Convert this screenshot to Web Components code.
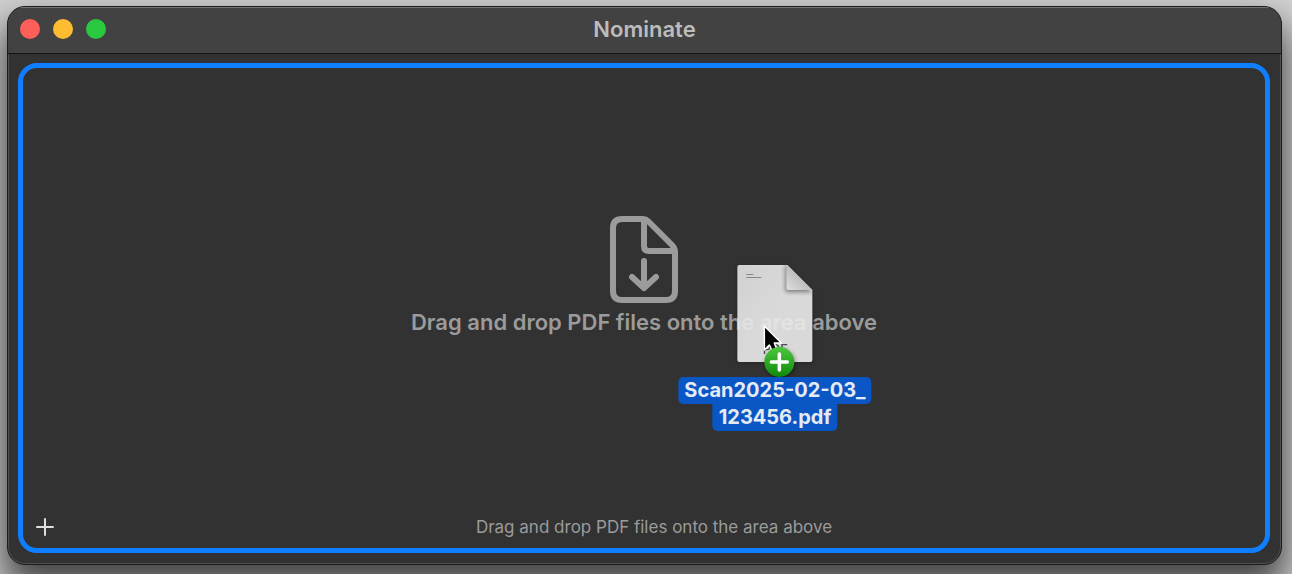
<!DOCTYPE html>
<html lang="en">
<head>
<meta charset="utf-8">
<meta name="viewport" content="width=device-width, initial-scale=1">
<title>Nominate</title>
<style>
    body{
        display: flex;
        box-sizing: border-box;
        min-height: 100vh;
        margin: 0;
        padding: 6px 10px 9px 7px;
        overflow: hidden;
        background: #d2d2d2;
        font-family: Inter, "Liberation Sans", sans-serif;
    }
</style>
</head>
<body>
<app-window heading="Nominate">
    <drop-zone>
        <drop-hint>Drag and drop PDF files onto the area above</drop-hint>
        <status-bar slot="footer">Drag and drop PDF files onto the area above</status-bar>
        <dragged-file slot="drag">
            <span>Scan2025-02-03_</span>
            <span slot="rest">123456.pdf</span>
        </dragged-file>
    </drop-zone>
</app-window>

<script>
//attach an open shadow root with the given markup
function attachTemplate(element, html){
    const template = document.createElement('template');
    template.innerHTML = html;
    element.attachShadow({mode: 'open'}).appendChild(template.content.cloneNode(true));
}

//window frame with title bar
class AppWindow extends HTMLElement{
    constructor(){
        super();
        attachTemplate(this, `
        <style>
            :host{
                display: flex;
                flex-direction: column;
                flex: 1;
                box-sizing: border-box;
                border: 1px solid #1c1c1c;
                border-radius: 18px;
                background: #323232;
                box-shadow: 0 20px 36px 4px rgba(0, 0, 0, .68);
                overflow: hidden;
            }
            header{
                display: grid;
                grid-template-columns: 1fr auto 1fr;
                align-items: center;
                height: 42px;
                padding: 0 12px 3px;
                background: #424242;
                border-top: 1px solid #747474;
                border-bottom: 1px solid #141414;
            }
            .lights{
                display: flex;
                gap: 13px;
            }
            button{
                width: 20px;
                height: 20px;
                padding: 0;
                border: none;
                border-radius: 50%;
            }
            .close{ background: #fe5f58; }
            .minimize{ background: #febc30; }
            .zoom{ background: #2ac940; }
            h1{
                margin: 0;
                font-size: 22px;
                line-height: 26px;
                font-weight: 600;
                color: #bcbcbc;
            }
            main{
                display: flex;
                flex: 1;
                padding: 9px 10px 10px 9px;
                border: 1px solid #505050;
                border-top: none;
                border-radius: 0 0 17px 17px;
            }
        </style>
        <header>
            <div class="lights">
                <button class="close" aria-label="Close"></button>
                <button class="minimize" aria-label="Minimize"></button>
                <button class="zoom" aria-label="Zoom"></button>
            </div>
            <h1></h1>
        </header>
        <main><slot></slot></main>
        `)
    }

    connectedCallback(){
        this.shadowRoot.querySelector('h1').innerText = this.getAttribute('heading')
    }
}

//highlighted drop target
class DropZone extends HTMLElement{
    constructor(){
        super();
        attachTemplate(this, `
        <style>
            :host{
                display: flex;
                flex-direction: column;
                flex: 1;
                position: relative;
                border: 5px solid #0f7fff;
                border-radius: 19px;
            }
            .area{
                display: flex;
                flex: 1;
                align-items: center;
                justify-content: center;
                padding-bottom: 24px;
            }
            ::slotted([slot="drag"]){
                position: absolute;
                top: 41%;
                left: calc(50% + 131px);
                transform: translateX(-50%);
            }
        </style>
        <div class="area"><slot></slot></div>
        <slot name="footer"></slot>
        <slot name="drag"></slot>
        `)
    }
}

//icon and caption in the middle of the drop target
class DropHint extends HTMLElement{
    constructor(){
        super();
        attachTemplate(this, `
        <style>
            :host{
                display: flex;
                flex-direction: column;
                align-items: center;
                gap: 6px;
                color: #9b9b9b;
            }
            p{
                margin: 0;
                font-size: 22px;
                line-height: 26px;
                font-weight: 600;
            }
        </style>
        <svg width="68" height="87" viewBox="0 0 68 87" fill="none" stroke="currentColor" stroke-width="6" stroke-linecap="round" stroke-linejoin="round" aria-hidden="true">
            <path d="M12 3H33Q36 3 38 5L62 29Q65 32 65 36V75Q65 84 56 84H12Q3 84 3 75V12Q3 3 12 3Z"/>
            <path d="M34 4V30Q34 35 39 35H64"/>
            <path d="M34 45V72M22 61L34 72L46 61"/>
        </svg>
        <p><slot></slot></p>
        `)
    }
}

//bottom row with add button
class StatusBar extends HTMLElement{
    constructor(){
        super();
        attachTemplate(this, `
        <style>
            :host{
                display: flex;
                align-items: center;
                height: 42px;
                padding: 0 12px;
                color: #9b9b9b;
            }
            button{
                display: flex;
                padding: 0;
                border: none;
                background: none;
                color: #dedede;
            }
            p{
                flex: 1;
                margin: 0;
                text-align: center;
                font-size: 17px;
                line-height: 20px;
                font-weight: 400;
            }
        </style>
        <button aria-label="Add files">
            <svg width="20" height="20" viewBox="0 0 20 20" fill="none" stroke="currentColor" stroke-width="2" stroke-linecap="round">
                <path d="M10 2V18M2 10H18"/>
            </svg>
        </button>
        <p><slot></slot></p>
        `)
    }
}

class DraggedFile extends HTMLElement{
    constructor(){
        super();
        attachTemplate(this, `
        <style>
            :host{
                display: flex;
                flex-direction: column;
                align-items: center;
            }
            svg{
                display: block;
                overflow: visible;
            }
            .name{
                padding: 0 6px;
                border-radius: 5px;
                background: #0a56c4;
                color: #e4ebf6;
                font-size: 20px;
                line-height: 27px;
                font-weight: 700;
                white-space: nowrap;
            }
            .rest{
                border-radius: 0 0 5px 5px;
            }
        </style>
        <svg width="76" height="112" viewBox="0 0 76 112" aria-hidden="true">
            <defs>
                <linearGradient id="paper" x1="0" y1="0" x2="1" y2="1">
                    <stop offset="0" stop-color="#eeeeee"/>
                    <stop offset=".5" stop-color="#f8f8f8"/>
                    <stop offset="1" stop-color="#f8f8f8"/>
                </linearGradient>
                <linearGradient id="fold" x1="0" y1="1" x2="1" y2="0">
                    <stop offset="0" stop-color="#ffffff"/>
                    <stop offset=".5" stop-color="#d8d8d8"/>
                </linearGradient>
                <linearGradient id="badge" x1="0" y1="0" x2="0" y2="1">
                    <stop offset="0" stop-color="#4cc73c"/>
                    <stop offset="1" stop-color="#0f8a0c"/>
                </linearGradient>
                <filter id="soft" x="-50%" y="-50%" width="200%" height="200%">
                    <feGaussianBlur stdDeviation="2"/>
                </filter>
                <clipPath id="sheet">
                    <path d="M2 0H50L75 25V95Q75 97 73 97H2Q0 97 0 95V2Q0 0 2 0Z"/>
                </clipPath>
            </defs>
            <path d="M2 2H50L75 27V97H0V2Z" fill="#000" opacity=".35" filter="url(#soft)"/>
            <g opacity=".86">
                <path d="M2 0H50L75 25V95Q75 97 73 97H2Q0 97 0 95V2Q0 0 2 0Z" fill="url(#paper)"/>
                <g clip-path="url(#sheet)">
                    <path d="M48 1V27H75L50 0Z" fill="#000" opacity=".45" filter="url(#soft)"/>
                </g>
                <path d="M50 0L75 25H51Q49 25 49 23V0Z" fill="url(#fold)"/>
                <path d="M9 9.500H16M9 12.500H24" stroke="#999" stroke-width="1"/>
                <text x="38" y="89" text-anchor="middle" font-size="13" font-weight="500" fill="#555">PDF</text>
            </g>
            <path d="M27 61V85L32 80L36 88L40 86L37 78H44Z" fill="#000" stroke="#fff" stroke-width="1.500" stroke-linejoin="round"/>
            <circle cx="43" cy="99" r="15" fill="#000" opacity=".4" filter="url(#soft)"/>
            <circle cx="42" cy="97" r="15" fill="url(#badge)"/>
            <path d="M42 89V105M34 97H50" stroke="#fff" stroke-width="3.500" stroke-linecap="round"/>
        </svg>
        <div class="name"><slot></slot></div>
        <div class="name rest"><slot name="rest"></slot></div>
        `)
    }
}

customElements.define('app-window', AppWindow)
customElements.define('drop-zone', DropZone)
customElements.define('drop-hint', DropHint)
customElements.define('status-bar', StatusBar)
customElements.define('dragged-file', DraggedFile)
</script>
</body>
</html>
